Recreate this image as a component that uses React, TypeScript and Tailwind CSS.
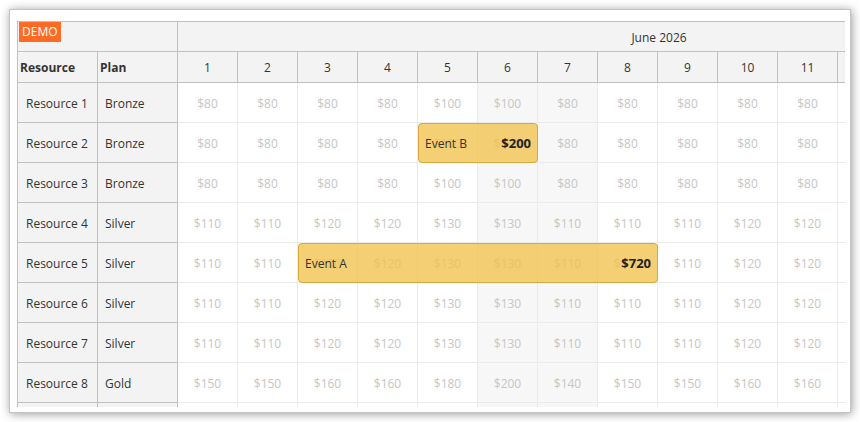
import React from "react";

type Plan = "Bronze" | "Silver" | "Gold";

const PRICES: Record<Plan, number[]> = {
  Bronze: [80, 80, 80, 80, 100, 100, 80, 80, 80, 80, 80],
  Silver: [110, 110, 120, 120, 130, 130, 110, 110, 110, 120, 120],
  Gold: [150, 150, 160, 160, 180, 200, 140, 150, 150, 160, 160],
};

const RESOURCES: { name: string; plan: Plan }[] = [
  { name: "Resource 1", plan: "Bronze" },
  { name: "Resource 2", plan: "Bronze" },
  { name: "Resource 3", plan: "Bronze" },
  { name: "Resource 4", plan: "Silver" },
  { name: "Resource 5", plan: "Silver" },
  { name: "Resource 6", plan: "Silver" },
  { name: "Resource 7", plan: "Silver" },
  { name: "Resource 8", plan: "Gold" },
];

const DAYS = Array.from({ length: 11 }, (_, i) => i + 1);
const WEEKEND = [5, 6];

// events: start col, span, row (0-based)
const EVENTS = [
  { text: "Event B", price: "$200", row: 1, start: 4, span: 2 },
  { text: "Event A", price: "$720", row: 4, start: 2, span: 6 },
];

export default function App() {
  return (
    <div className="w-[860px] h-[422px] bg-white pt-[9px] pl-[9px] font-['Open_Sans',sans-serif] text-[12px] text-[#333]">
      <div className="w-[842px] h-[404px] bg-white border border-[#c4c4c4] shadow-[1px_1px_9px_rgba(0,0,0,0.4)] pl-[7px] pt-[11px]">
        <div className="w-[828px] h-[386px] overflow-hidden flex border-l border-t border-[#c0c0c0]">
          {/* Row headers */}
          <div className="w-[160px] shrink-0 flex flex-col bg-[#f3f3f3]">
            <div className="h-[30px] shrink-0 border-b border-r border-[#c0c0c0] pl-px">
              <span className="inline-block bg-[#ff6a24] text-white px-[3px] leading-[20px]">DEMO</span>
            </div>
            <div className="h-[31px] shrink-0 flex border-b border-[#c0c0c0] font-bold">
              <div className="w-[80px] border-r border-[#c0c0c0] pl-[2px] pt-[2px] flex items-center">Resource</div>
              <div className="w-[80px] border-r border-[#c0c0c0] pl-[2px] pt-[2px] flex items-center">Plan</div>
            </div>
            {RESOURCES.map((r) => (
              <div key={r.name} className="h-[40px] shrink-0 flex border-b border-[#c0c0c0]">
                <div className="w-[80px] border-r border-[#c0c0c0] pl-[8px] pt-[2px] flex items-center">{r.name}</div>
                <div className="w-[80px] border-r border-[#c0c0c0] pl-[7px] pt-[2px] flex items-center">{r.plan}</div>
              </div>
            ))}
            {/* partially visible next row */}
            <div className="h-[40px] shrink-0 flex border-b border-[#c0c0c0]">
              <div className="w-[80px] border-r border-[#c0c0c0]" />
              <div className="w-[80px] border-r border-[#c0c0c0]" />
            </div>
          </div>

          {/* Scheduler grid */}
          <div className="relative flex-1 min-w-0 flex flex-col">
            <div className="h-[30px] shrink-0 bg-[#f3f3f3] border-b border-[#c0c0c0] flex">
              <div className="w-[962px] shrink-0 pt-[2px] flex items-center justify-center">June 2026</div>
            </div>
            <div className="h-[31px] shrink-0 bg-[#f3f3f3] border-b border-[#c0c0c0] flex">
              {DAYS.map((d) => (
                <div key={d} className="w-[60px] shrink-0 border-r border-[#c0c0c0] pt-[2px] flex items-center justify-center">
                  {d}
                </div>
              ))}
              <div className="w-[60px] shrink-0 border-r border-[#c0c0c0]" />
            </div>
            {RESOURCES.map((r) => (
              <div key={r.name} className="h-[40px] shrink-0 flex">
                {PRICES[r.plan].map((p, i) => (
                  <div
                    key={i}
                    className={`w-[60px] shrink-0 border-r border-b border-[#ebebeb] pt-[2px] flex items-center justify-center text-[#c6c6c6] ${
                      WEEKEND.includes(i) ? "bg-[#f7f7f7]" : "bg-white"
                    }`}
                  >
                    ${p}
                  </div>
                ))}
                <div className="w-[60px] shrink-0 border-r border-b border-[#ebebeb]" />
              </div>
            ))}
            <div className="h-[40px] shrink-0 flex">
              {Array.from({ length: 12 }, (_, i) => (
                <div
                  key={i}
                  className={`w-[60px] shrink-0 border-r border-b border-[#ebebeb] ${
                    WEEKEND.includes(i) ? "bg-[#f7f7f7]" : "bg-white"
                  }`}
                />
              ))}
            </div>

            {EVENTS.map((e) => (
              <div
                key={e.text}
                className="absolute h-[40px] rounded-[4px] border border-[#d8a93c] bg-[#f1c350]/80 flex items-center justify-between px-[6px] pt-[2px]"
                style={{ left: e.start * 60, width: e.span * 60, top: 61 + e.row * 40 }}
              >
                <span className="text-[#333]">{e.text}</span>
                <span className="font-bold text-[13px] text-[#222]">{e.price}</span>
              </div>
            ))}
          </div>
        </div>
      </div>
    </div>
  );
}
